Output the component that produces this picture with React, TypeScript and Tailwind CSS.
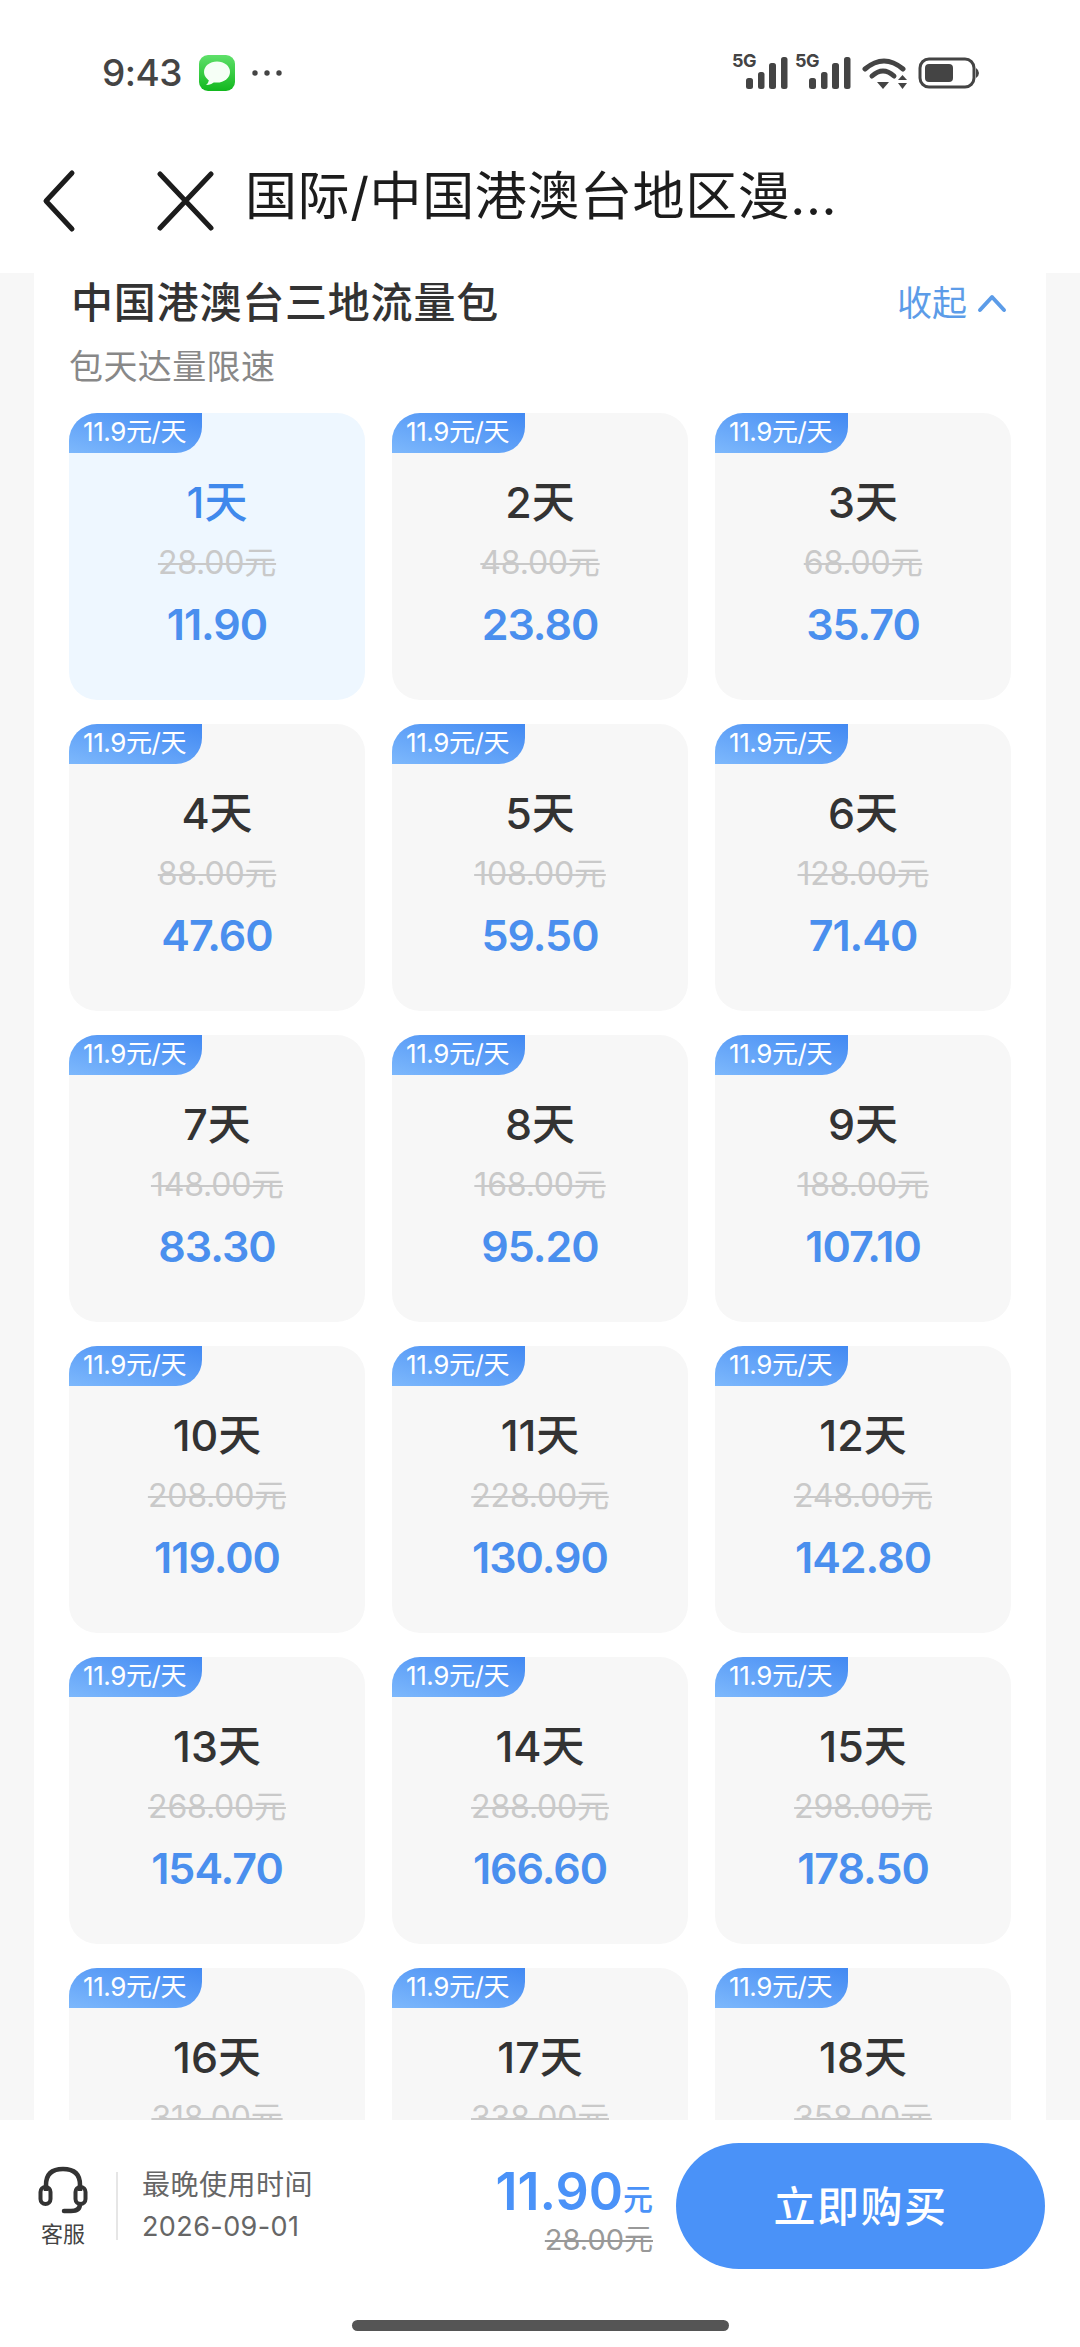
const cjk = "font-['Inter','Noto_Sans_CJK_SC',sans-serif]";

const plans = [
  ["1天", "28.00元", "11.90"], ["2天", "48.00元", "23.80"], ["3天", "68.00元", "35.70"],
  ["4天", "88.00元", "47.60"], ["5天", "108.00元", "59.50"], ["6天", "128.00元", "71.40"],
  ["7天", "148.00元", "83.30"], ["8天", "168.00元", "95.20"], ["9天", "188.00元", "107.10"],
  ["10天", "208.00元", "119.00"], ["11天", "228.00元", "130.90"], ["12天", "248.00元", "142.80"],
  ["13天", "268.00元", "154.70"], ["14天", "288.00元", "166.60"], ["15天", "298.00元", "178.50"],
  ["16天", "318.00元", "190.40"], ["17天", "338.00元", "202.30"], ["18天", "358.00元", "214.20"],
];

function Signal() {
  return (
    <svg width="56" height="36" viewBox="0 0 56 36" className="shrink-0">
      <text x="0" y="14" fontSize="18" fontWeight="700" fill="#444" letterSpacing="-0.5" fontFamily="Inter, sans-serif">5G</text>
      <rect x="14" y="25" width="7" height="11" rx="2.5" fill="#444" />
      <rect x="26" y="19" width="6.5" height="17" rx="2.5" fill="#444" />
      <rect x="37" y="10" width="7" height="26" rx="2.5" fill="#444" />
      <rect x="49" y="4" width="6.5" height="32" rx="2.5" fill="#444" />
    </svg>
  );
}

function StatusBar() {
  return (
    <div className="h-[132px] pt-[50px] pl-[102px] pr-[100px] flex items-start justify-between">
      <div className="flex items-center h-[46px]">
        <span className="font-['Inter',sans-serif] text-[37px] font-medium text-[#444] tracking-[-0.5px]">9:43</span>
        <svg width="36" height="36" viewBox="0 0 36 36" className="ml-[17px]">
          <defs>
            <linearGradient id="msg" x1="0" y1="0" x2="0" y2="1">
              <stop offset="0" stopColor="#5fe06a" />
              <stop offset="1" stopColor="#12b81e" />
            </linearGradient>
          </defs>
          <rect width="36" height="36" rx="9" fill="url(#msg)" />
          <ellipse cx="18" cy="17" rx="13" ry="10.5" fill="#f6fff6" />
          <path d="M10 23 Q10 28 7 30 Q13 30 16 26 Z" fill="#f6fff6" />
        </svg>
        <svg width="30" height="8" viewBox="0 0 30 8" className="ml-[17px]">
          <circle cx="3" cy="4" r="2.7" fill="#444" />
          <circle cx="15" cy="4" r="2.7" fill="#444" />
          <circle cx="27" cy="4" r="2.7" fill="#444" />
        </svg>
      </div>
      <div className="flex items-start mt-[3px]">
        <Signal />
        <div className="ml-[7px]"><Signal /></div>
        <svg width="46" height="32" viewBox="0 0 46 32" className="ml-[11px] mt-[5px]">
          <path d="M3 11 Q22 -5 41 11" fill="none" stroke="#444" strokeWidth="5" strokeLinecap="round" />
          <path d="M10 18 Q21 8 32 18" fill="none" stroke="#444" strokeWidth="5" strokeLinecap="round" />
          <path d="M15 24 L27 24 L21 31 Z" fill="#444" />
          <path d="M36 22 L45 22 L40.5 17 Z" fill="#444" />
          <path d="M36 25 L45 25 L40.5 31 Z" fill="#444" />
        </svg>
        <svg width="62" height="32" viewBox="0 0 62 32" className="ml-[10px] mt-[4px]">
          <rect x="2" y="2" width="54" height="28" rx="9" fill="none" stroke="#444" strokeWidth="3" />
          <rect x="7" y="7" width="28" height="18" rx="4" fill="#444" />
          <path d="M58 11 Q61 13 61 16 Q61 19 58 21 Z" fill="#444" />
        </svg>
      </div>
    </div>
  );
}

function NavBar() {
  return (
    <div className="h-[141px] flex items-start shrink-0">
      <svg width="40" height="64" viewBox="0 0 40 64" className="ml-[40px] mt-[37px]">
        <path d="M32 4 L6 32 L32 60" fill="none" stroke="#1c1c1c" strokeWidth="5" strokeLinecap="round" strokeLinejoin="round" />
      </svg>
      <svg width="60" height="60" viewBox="0 0 60 60" className="ml-[76px] mt-[39px]">
        <path d="M4 3 L55 57 M55 3 L4 57" fill="none" stroke="#1c1c1c" strokeWidth="5" strokeLinecap="round" />
      </svg>
      <div className={`${cjk} ml-[29px] mt-[33px] text-[52px] leading-[64px] tracking-[0.6px] text-[#1c1c1c] whitespace-nowrap`}>
        国际/中国港澳台地区漫...
      </div>
    </div>
  );
}

function Card({ day, old, price, active }: { day: string; old: string; price: string; active: boolean }) {
  return (
    <div className={`${cjk} h-[287px] rounded-[28px] overflow-hidden flex flex-col items-center ${active ? "bg-[#eef7ff]" : "bg-[#f7f7f7]"}`}>
      <div className="self-start w-[133px] h-[40px] rounded-br-[26px] bg-gradient-to-tr from-[#7db8fc] to-[#4289f2] text-white text-[26px] leading-[38px] pl-[14px] tracking-[-0.4px] whitespace-nowrap">
        11.9元/天
      </div>
      <div className={`mt-[25px] text-[43px] leading-[48px] font-medium ${active ? "text-[#4089ec]" : "text-[#333]"}`}>{day}</div>
      <div className="mt-[19px] text-[32px] leading-[36px] text-[#c9c9c9] line-through decoration-[2px] tracking-[-0.2px]">{old}</div>
      <div className="mt-[17px] text-[43px] leading-[52px] font-semibold text-[#4a8fee] tracking-[-1px]">{price}</div>
    </div>
  );
}

function Bottom() {
  return (
    <div className={`${cjk} h-[227px] shrink-0 bg-white relative`}>
      <div className="flex items-start h-[149px] pt-[23px] pr-[35px]">
        <div className="w-[116px] shrink-0 flex flex-col items-center pt-[22px] pl-[10px]">
          <svg width="50" height="50" viewBox="0 0 50 50" className="-ml-[1px]">
            <path d="M8 26 V20 Q8 4 25 4 Q42 4 42 20 V26" fill="none" stroke="#333" strokeWidth="4.5" />
            <rect x="2.5" y="22" width="10" height="17" rx="5" fill="none" stroke="#333" strokeWidth="4" />
            <rect x="37.5" y="22" width="10" height="17" rx="5" fill="none" stroke="#333" strokeWidth="4" />
            <path d="M42 39 Q42 46 33 46 H26" fill="none" stroke="#333" strokeWidth="4.5" strokeLinecap="round" />
          </svg>
          <div className="text-[22px] leading-[28px] text-[#444] mt-[5px]">客服</div>
        </div>
        <div className="w-[2px] h-[68px] bg-[#e6e6e6] mt-[29px] shrink-0"></div>
        <div className="ml-[24px] mt-[22px] text-[#666]">
          <div className="text-[28px] leading-[41px] tracking-[0.5px]">最晚使用时间</div>
          <div className="text-[27px] leading-[41px] tracking-[0.4px]">2026-09-01</div>
        </div>
        <div className="ml-auto mr-[23px] flex flex-col items-end mt-[23px]">
          <div className="flex items-baseline text-[#4a92f8] font-semibold leading-[52px]">
            <span className="text-[52px]">11.90</span>
            <span className="text-[30px] font-medium">元</span>
          </div>
          <div className="text-[29px] leading-[36px] text-[#999] line-through decoration-[2px] -mt-[3px]">28.00元</div>
        </div>
        <button className="w-[369px] h-[126px] rounded-[63px] bg-[#4a92f8] text-white text-[42px] font-medium tracking-[1.5px] shrink-0">
          立即购买
        </button>
      </div>
      <div className="mt-[51px] mx-auto w-[377px] h-[11px] rounded-full bg-[#555]"></div>
    </div>
  );
}

export default function App() {
  return (
    <div className="w-[1080px] h-[2347px] overflow-hidden bg-white flex flex-col">
      <StatusBar />
      <NavBar />
      <div className="flex-1 min-h-0 overflow-hidden bg-[#f7f7f7] px-[34px]">
        <div className="bg-white h-full px-[35px] overflow-hidden">
          <div className={`${cjk} flex items-start justify-between h-[140px]`}>
            <div>
              <div className="text-[42px] leading-[56px] font-medium text-[#333] mt-[2px] ml-[2px] tracking-[0.8px]">中国港澳台三地流量包</div>
              <div className="text-[34px] leading-[46px] text-[#888] mt-[13px] tracking-[0.4px]">包天达量限速</div>
            </div>
            <div className="flex items-center mt-[9px] mr-[4px]">
              <span className="text-[35px] leading-[42px] text-[#5c9ce8]">收起</span>
              <svg width="30" height="20" viewBox="0 0 30 20" className="ml-[10px]">
                <path d="M3 17 L15 4 L27 17" fill="none" stroke="#5c9ce8" strokeWidth="4" strokeLinecap="round" strokeLinejoin="round" />
              </svg>
            </div>
          </div>
          <div className="grid grid-cols-3 gap-x-[27px] gap-y-[24px]">
            {plans.map((p, i) => (
              <Card key={p[0]} day={p[0]} old={p[1]} price={p[2]} active={i === 0} />
            ))}
          </div>
        </div>
      </div>
      <Bottom />
    </div>
  );
}
